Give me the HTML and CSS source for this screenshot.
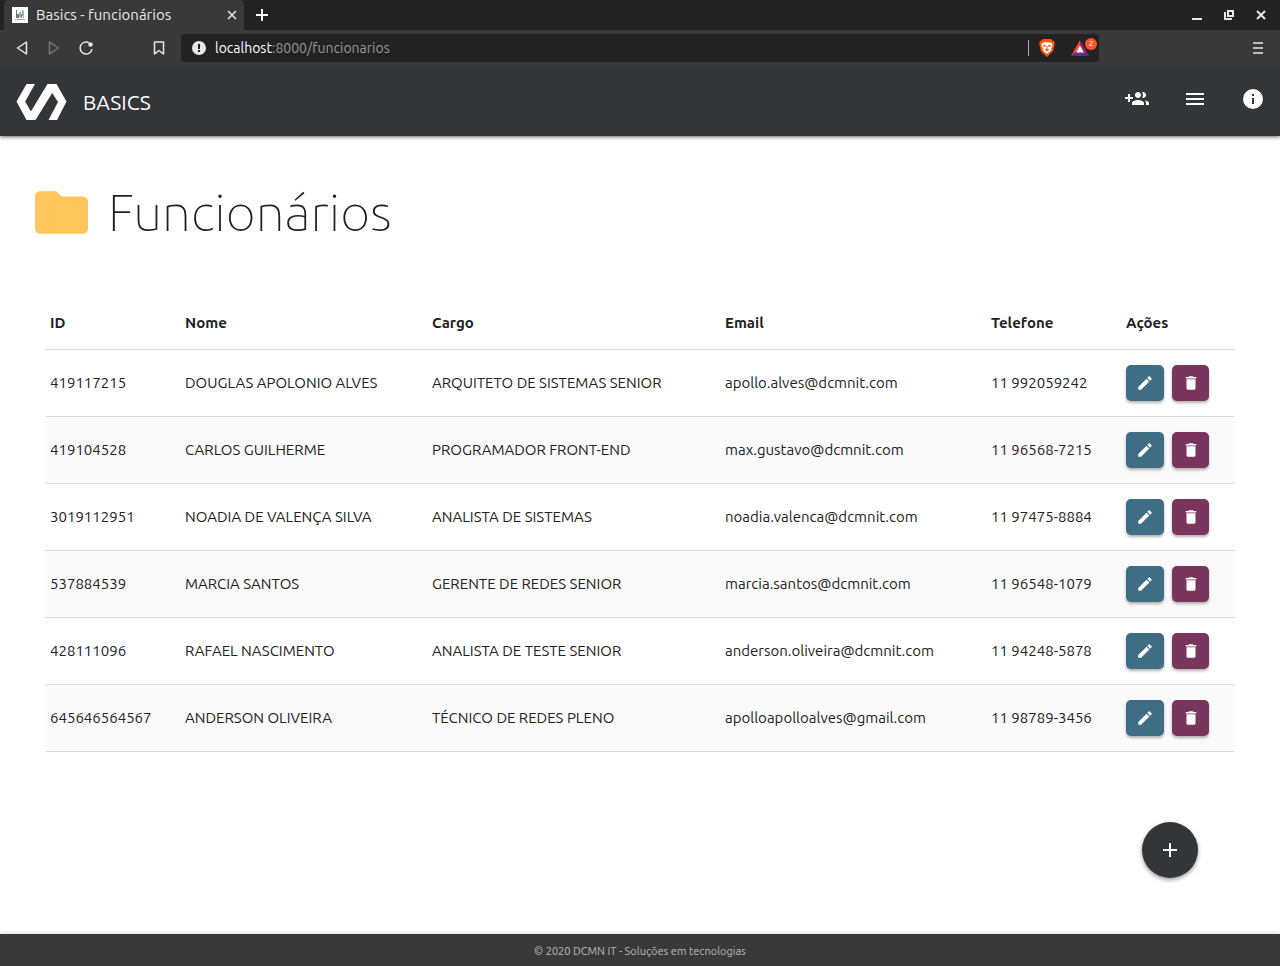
FILE: index.html
```html
<!DOCTYPE html>
<html lang="pt-BR">
<head>
<meta charset="utf-8">
<title>Basics - funcionários</title>
<link rel="stylesheet" href="styles.css">
</head>
<body>
<svg class="sprite" aria-hidden="true">
  <symbol id="edit" viewBox="0 0 24 24"><path d="M3 17.25V21h3.75L17.81 9.94l-3.75-3.75L3 17.25zM20.71 7.04c.39-.39.39-1.02 0-1.41l-2.34-2.34c-.39-.39-1.02-.39-1.41 0l-1.83 1.83 3.75 3.75 1.83-1.83z"/></symbol>
  <symbol id="trash" viewBox="0 0 24 24"><path d="M6 19c0 1.100.9 2 2 2h8c1.100 0 2-.9 2-2V7H6v12zM19 4h-3.500l-1-1h-5l-1 1H5v2h14V4z"/></symbol>
</svg>
<div class="window">
  <div class="tabs">
    <div class="tab">
      <svg class="favicon" viewBox="0 0 16 16"><path fill="#fff" d="M0 0h16v16H0z"/><path fill="#777" d="M4 3h1v8H4zM5 7h2v4H5zM9 7h1v4H9z"/><path fill="#7fb9c4" d="M7 5h2v5H7zM10 3h1v6h-1z"/><path fill="#777" d="M11 4h1v7h-1zM3 12h10v1H3z" opacity=".6"/></svg>
      <span class="tab-title">Basics - funcionários</span>
      <button class="plain" aria-label="Fechar aba"><svg class="i10" viewBox="0 0 10 10"><path class="thin" d="M1 1l8 8M9 1L1 9"/></svg></button>
    </div>
    <button class="plain new-tab" aria-label="Nova aba"><svg class="i12" viewBox="0 0 12 12"><path class="line" d="M6 0v12M0 6h12"/></svg></button>
    <div class="controls">
      <button class="plain" aria-label="Minimizar"><svg class="i12" viewBox="0 0 12 12"><path class="line" d="M1 10h10"/></svg></button>
      <button class="plain" aria-label="Restaurar"><svg class="i12" viewBox="0 0 12 12"><path class="line" d="M5 2h5v5H5zM2 3v7h7"/></svg></button>
      <button class="plain" aria-label="Fechar"><svg class="i12" viewBox="0 0 12 12"><path class="line" d="M2 2l8 8M10 2l-8 8"/></svg></button>
    </div>
  </div>
  <div class="toolbar">
    <div class="nav">
      <button class="plain" aria-label="Voltar"><svg class="i16" viewBox="0 0 16 16"><path class="thin" d="M12.500 2v12L3.500 8z"/></svg></button>
      <button class="plain off" aria-label="Avançar"><svg class="i16" viewBox="0 0 16 16"><path class="thin" d="M3.500 2v12L12.500 8z"/></svg></button>
      <button class="plain" aria-label="Recarregar"><svg class="i16" viewBox="0 0 16 16"><path class="thin" d="M14 9A6 6 0 1 1 11 2.800"/><circle cx="12.500" cy="4.500" r="2.200"/></svg></button>
    </div>
    <button class="plain" aria-label="Favoritos"><svg class="i16" viewBox="0 0 16 16"><path class="thin" d="M3.500 2h9v12L8 10.500 3.500 14z"/></svg></button>
    <div class="address">
      <svg class="i16" viewBox="0 0 16 16"><circle cx="8" cy="8" r="7" fill="#e8e8e8"/><path fill="#222" d="M7 4h2v5H7zM7 10h2v2H7z"/></svg>
      <span class="url"><b>localhost</b>:8000/funcionarios</span>
      <span class="split"></span>
      <svg class="brave" viewBox="0 0 16 18"><path fill="#fb5410" d="M4 0h8l1.500 1.500 1.800.8.400 3-1.700 7L8 18l-6-5.700-1.700-7 .4-3 1.800-.8z"/><path fill="#fff" d="M3 4l3-.8h4l3 .8.500 3-1.500 2.500.5 1.500L8 15l-4.500-4L4 9.500 2.500 7z"/><path fill="#fb5410" d="M4 5.500l3 1-.5 1.500-2-.5zM12 5.500l-3 1 .5 1.500 2-.5zM5.500 10.500L8 10l2.500.5L8 12.500zM7.500 7h1v3h-1z"/></svg>
      <span class="rewards"><svg class="bat" viewBox="0 0 18 16"><path fill="#ff4724" d="M9 0v6L5 12l-5 4z"/><path fill="#9e1f63" d="M9 0l9 16-5-4-4-6z"/><path fill="#662d91" d="M0 16l5-4h8l5 4z"/><path fill="#fff" d="M9 5.500l4 7H5z"/></svg><span class="badge">2</span></span>
    </div>
    <button class="plain menu" aria-label="Menu"><svg class="i12" viewBox="0 0 12 12"><path class="line" d="M1 1h10M1 6h10M1 11h10"/></svg></button>
  </div>
</div>
<header class="header">
  <a class="brand" href="#"><svg class="logo" viewBox="0 0 50 36"><path fill="#fff" d="M10 0h8.500L8.700 17.500l5.700 10L31 0h9l10 17.500L40.500 36H32l9.500-18L35.700 9 19 36h-9L0 17.500z"/></svg>BASICS</a>
  <nav class="links">
    <a href="#" aria-label="Adicionar funcionário"><svg class="i24" viewBox="0 0 24 24"><path d="M8 10H5V7H3v3H0v2h3v3h2v-3h3v-2zm10 1c1.660 0 2.990-1.340 2.990-3S19.660 5 18 5c-.32 0-.63.05-.91.140.57.810.9 1.790.9 2.860s-.34 2.040-.9 2.860c.28.090.59.140.91.140zm-5 0c1.660 0 2.990-1.340 2.990-3S14.660 5 13 5s-3 1.340-3 3 1.340 3 3 3zm6.620 2.160c.83.730 1.380 1.660 1.380 2.840v2h3v-2c0-1.540-2.370-2.490-4.380-2.840zM13 13c-2 0-6 1-6 3v2h12v-2c0-2-4-3-6-3z"/></svg></a>
    <a href="#" aria-label="Lista"><svg class="i24" viewBox="0 0 24 24"><path d="M3 18h18v-2H3v2zm0-5h18v-2H3v2zm0-7v2h18V6H3z"/></svg></a>
    <a href="#" aria-label="Informações"><svg class="i24" viewBox="0 0 24 24"><path d="M12 2a10 10 0 100 20 10 10 0 000-20zm1 15h-2v-6h2v6zm0-8h-2V7h2v2z"/></svg></a>
  </nav>
</header>
<main class="main">
  <h1 class="title"><svg class="folder" viewBox="2 4 20 16"><path d="M10 4H4c-1.100 0-2 .9-2 2v12c0 1.100.9 2 2 2h16c1.100 0 2-.9 2-2V8c0-1.100-.9-2-2-2h-8l-2-2z"/></svg>Funcionários</h1>
  <table class="table">
    <colgroup><col class="c-id"><col class="c-name"><col class="c-role"><col class="c-mail"><col class="c-tel"><col class="c-act"></colgroup>
    <thead><tr><th>ID</th><th>Nome</th><th>Cargo</th><th>Email</th><th>Telefone</th><th>Ações</th></tr></thead>
    <tbody>
      <tr><td>419117215</td><td>DOUGLAS APOLONIO ALVES</td><td>ARQUITETO DE SISTEMAS SENIOR</td><td>apollo.alves@dcmnit.com</td><td>11 992059242</td><td><div class="actions"><button class="btn edit" aria-label="Editar"><svg><use href="#edit"/></svg></button><button class="btn trash" aria-label="Excluir"><svg><use href="#trash"/></svg></button></div></td></tr>
      <tr><td>419104528</td><td>CARLOS GUILHERME</td><td>PROGRAMADOR FRONT-END</td><td>max.gustavo@dcmnit.com</td><td>11 96568-7215</td><td><div class="actions"><button class="btn edit" aria-label="Editar"><svg><use href="#edit"/></svg></button><button class="btn trash" aria-label="Excluir"><svg><use href="#trash"/></svg></button></div></td></tr>
      <tr><td>3019112951</td><td>NOADIA DE VALENÇA SILVA</td><td>ANALISTA DE SISTEMAS</td><td>noadia.valenca@dcmnit.com</td><td>11 97475-8884</td><td><div class="actions"><button class="btn edit" aria-label="Editar"><svg><use href="#edit"/></svg></button><button class="btn trash" aria-label="Excluir"><svg><use href="#trash"/></svg></button></div></td></tr>
      <tr><td>537884539</td><td>MARCIA SANTOS</td><td>GERENTE DE REDES SENIOR</td><td>marcia.santos@dcmnit.com</td><td>11 96548-1079</td><td><div class="actions"><button class="btn edit" aria-label="Editar"><svg><use href="#edit"/></svg></button><button class="btn trash" aria-label="Excluir"><svg><use href="#trash"/></svg></button></div></td></tr>
      <tr><td>428111096</td><td>RAFAEL NASCIMENTO</td><td>ANALISTA DE TESTE SENIOR</td><td>anderson.oliveira@dcmnit.com</td><td>11 94248-5878</td><td><div class="actions"><button class="btn edit" aria-label="Editar"><svg><use href="#edit"/></svg></button><button class="btn trash" aria-label="Excluir"><svg><use href="#trash"/></svg></button></div></td></tr>
      <tr><td>645646564567</td><td>ANDERSON OLIVEIRA</td><td>TÉCNICO DE REDES PLENO</td><td>apolloapolloalves@gmail.com</td><td>11 98789-3456</td><td><div class="actions"><button class="btn edit" aria-label="Editar"><svg><use href="#edit"/></svg></button><button class="btn trash" aria-label="Excluir"><svg><use href="#trash"/></svg></button></div></td></tr>
    </tbody>
  </table>
  <button class="fab" aria-label="Adicionar"><svg class="i24" viewBox="0 0 24 24"><path d="M19 13h-6v6h-2v-6H5v-2h6V5h2v6h6v2z"/></svg></button>
</main>
<footer class="footer">© 2020 DCMN IT - Soluções em tecnologias</footer>
</body>
</html>
```
FILE: styles.css
```css
* { box-sizing: border-box; }
body {
  margin: 0 1px 0 0;
  min-height: 100vh;
  display: flex;
  flex-direction: column;
  background: #fff;
  color: #212121;
  font: 15px/20px Ubuntu, "Noto Sans", sans-serif;
}
svg { display: block; fill: currentColor; }
.sprite { display: none; }
.line { fill: none; stroke: currentColor; stroke-width: 2; }
.thin { fill: none; stroke: currentColor; stroke-width: 1.5; stroke-linejoin: round; }
.i10 { width: 10px; height: 10px; }
.i12 { width: 12px; height: 12px; }
.i16 { width: 16px; height: 16px; }
.i24 { width: 24px; height: 24px; }
.plain { display: block; margin: 0; padding: 0; border: 0; background: none; color: #e8e8e8; }

.window { position: relative; z-index: 1; background: #393939; color: #e8e8e8; }
.tabs { display: flex; align-items: center; height: 30px; background: #222; }
.tab { display: flex; align-items: center; gap: 8px; width: 240px; height: 30px; margin-left: 4px; padding: 0 7px 0 8px; border-radius: 4px 4px 0 0; background: #393939; }
.favicon { width: 16px; height: 16px; }
.tab-title { flex: 1; }
.new-tab { margin-left: 12px; color: #fff; }
.controls { display: flex; gap: 20px; margin-left: auto; padding-right: 13px; }
.toolbar { display: flex; align-items: center; height: 38px; padding: 0 16px 2px 14px; }
.nav { display: flex; gap: 16px; margin-right: 57px; }
.off { color: #777; }
.address { display: flex; flex: 1; align-items: center; gap: 8px; height: 28px; margin-left: 14px; padding: 0 2px 0 10px; border-radius: 4px; background: #222; }
.url { flex: 1; color: #999; font-size: 14px; }
.url b { color: #fff; font-weight: 400; }
.split { width: 1px; height: 16px; background: #aaa; }
.brave { width: 16px; height: 18px; margin: 0 8px 0 2px; }
.rewards { position: relative; width: 26px; }
.bat { width: 18px; height: 16px; }
.badge { position: absolute; top: -2px; right: 0; width: 12px; height: 12px; border-radius: 6px; background: #fb542b; color: #fff; font-size: 8px; line-height: 12px; text-align: center; }
.menu { margin-left: 153px; color: #bbb; }

.header { display: flex; justify-content: space-between; height: 68px; padding: 0 15px 0 16px; background: #343539; color: #fff; box-shadow: 0 1px 4px rgba(0, 0, 0, .6); }
.brand { display: flex; align-items: center; gap: 16px; color: #fff; font-size: 21px; text-decoration: none; }
.logo { width: 51px; height: 36px; }
.links { display: flex; align-items: center; gap: 34px; padding-bottom: 6px; }
.links a { color: #fff; }

.main { flex: 1; padding: 40px 45px 56px; }
.title { display: flex; align-items: center; gap: 20px; height: 72px; margin: 0 0 48px -10px; font-family: "Ubuntu Thin", Ubuntu, "Noto Sans", sans-serif; font-size: 52px; font-weight: 100; }
.folder { width: 53px; height: 43px; fill: #ffc65c; }
.table { width: 100%; border-collapse: collapse; table-layout: fixed; }
.c-id { width: 135px; }
.c-name { width: 247px; }
.c-role { width: 293px; }
.c-mail { width: 266px; }
.c-tel { width: 135px; }
th, td { padding: 15px 5px; border-bottom: 1px solid #ddd; text-align: left; white-space: nowrap; }
th { height: 53px; padding: 17px 5px 15px; font-weight: 700; }
td { height: 67px; }
tbody tr:nth-child(even) { background: #fafafa; }
.actions { display: flex; gap: 8px; }
.btn { width: 38px; height: 36px; padding: 0 10px; border: 0; border-radius: 5px; color: #fff; box-shadow: 0 2px 3px rgba(0, 0, 0, .3); }
.btn svg { width: 18px; height: 18px; }
.edit { background: #3f6d84; }
.trash { width: 37px; background: #7a355d; }
.fab { display: flex; align-items: center; justify-content: center; width: 56px; height: 56px; margin: 70px 37px 0 auto; padding: 0; border: 0; border-radius: 50%; background: #343539; color: #fff; box-shadow: 0 2px 4px rgba(0, 0, 0, .4); }
.footer { height: 32px; background: #393939; color: #bbb; font-size: 11px; line-height: 34px; text-align: center; box-shadow: 0 -1px 4px rgba(0, 0, 0, .15); }
```
